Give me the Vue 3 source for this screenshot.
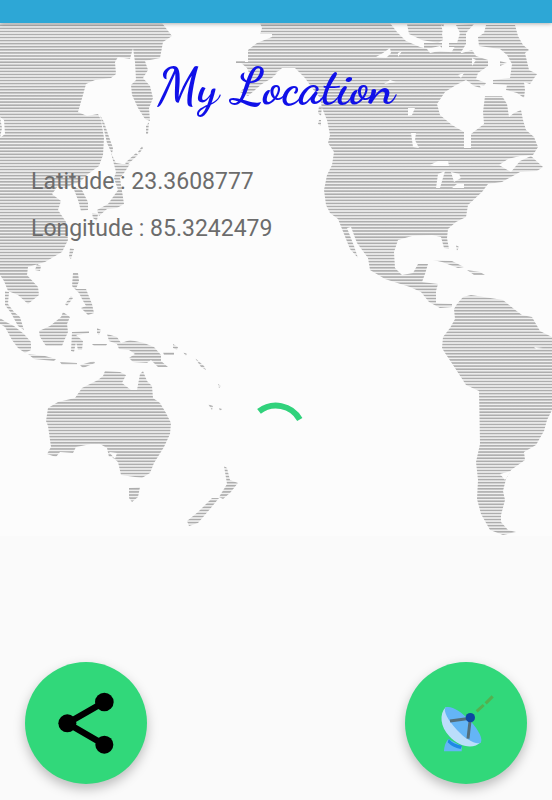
<script setup>
import { ref } from 'vue'

const latitude = ref('23.3608777')
const longitude = ref('85.3242479')

const land = [
  // Asia
  'M0 23H162L172 36 163 42 160 58 145 61 148 70 143 78 150 86 153 98 149 108 150 121 145 119 138 108 132 95 131 85 136 80 135 62 133 48 130 59 118 57 115 62 116 74 111 78 95 80 86 84 83 95 78 112 87 116 98 114 101 120 104 138 103 155 99 166 88 174 80 182 73 184 66 188 58 186 52 194 61 201 58 210 66 222 68 240 62 252 45 262 28 267 27 275 38 287 39 295 28 304 18 295 8 291 4 281 0 275Z',
  // Korea
  'M73 187L82 190 88 202 88 210 81 211 78 200Z',
  // Sakhalin, Japan and the Kurils
  'M100 115L104 122 108 134 113 148 112 154 107 143 104 130Z',
  'M111 153L116 163 122 164 130 164 124 173 120 178 124 204 117 208 107 209 99 216 97 210 108 204 113 197 118 190 114 178 116 172Z',
  'M92 213L98 214 97 221 93 218Z',
  'M149 122L148 134 146 134 146 126ZM142 146L143 148 139 154 138 152ZM136 153L138 155 127 165 125 163Z',
  // Taiwan and Hainan
  'M70 248L74 249 71 259 69 257ZM37 264L41 266 40 271 35 270Z',
  // Malay peninsula and Sumatra
  'M5 291L9 292 8 304 14 312 20 317 24 330 18 326 11 313 5 305Z',
  'M0 318L6 322 14 326 24 334 31 342 31 350 25 353 18 348 12 340 5 327 0 324Z',
  'M28 354L45 356 56 359 54 361 34 359ZM60 362L77 363 77 365 62 365ZM80 365L94 361 95 363 83 368Z',
  // Borneo and Sulawesi
  'M39 331L50 326 61 317 63 312 70 317 67 324 68 332 64 341 62 346 46 346 40 337Z',
  'M72 332L89 331 89 333 76 335 83 341 82 350 78 350 76 342 74 352 71 351Z',
  // Philippines
  'M73 273L78 273 79 281 76 289 86 289 92 304 94 313 88 315 81 308 86 306 82 299 79 293 72 286ZM71 296L73 298 67 306 65 304ZM97 328L101 330 99 335 97 333ZM92 344L107 344 106 346 94 346Z',
  // New Guinea and the Pacific islands
  'M107 334L117 337 121 343 130 340 144 343 154 347 161 355 161 361 168 367 158 367 151 360 147 363 133 362 129 358 135 354 129 350 119 349 117 344 109 341Z',
  'M163 352L174 352 174 355 164 355ZM173 344L178 347 177 350 173 348ZM183 352L187 354 186 356ZM195 358L204 366 206 370 201 367ZM208 404L213 406 212 410ZM218 384L221 386 219 388ZM219 408L222 409 220 411Z',
  // Australia and Tasmania
  'M105 371L120 372 126 375 122 383 131 390 137 390 140 374 143 371 147 381 152 386 153 398 160 403 166 413 171 423 170 434 164 447 154 463 150 473 142 478 128 476 121 475 118 462 112 457 109 457 107 448 100 444 91 444 76 447 73 453 60 452 56 457 47 454 51 447 48 426 46 421 48 408 58 402 75 398 82 388 98 380 103 376Z',
  'M129 488L140 487 138 497 132 502 129 498Z',
  // New Zealand
  'M224 466L227 468 230 480 238 483 230 493 223 499 219 497 224 489 227 484ZM212 498L219 498 210 509 198 523 189 526 187 521 198 512Z',
  // North America
  'M260 23H390L397 32 406 41 420 47 432 50 449 52 462 53 472 50 476 56 488 60 488 66 478 73 476 79 481 88 474 86 466 80 456 85 445 92 437 104 440 115 452 125 464 132 464 148 471 148 471 134 484 124 483 112 485 96 502 96 507 104 509 117 514 113 521 110 523 120 526 130 534 137 538 147 533 155 520 156 508 159 499 165 511 172 520 161 531 156 543 167 537 171 520 172 502 182 488 184 482 192 468 205 466 217 456 222 448 229 447 238 449 249 444 248 441 237 432 235 412 236 398 240 394 252 395 268 402 275 413 273 418 264 428 264 425 274 422 282 438 284 436 291 436 303 452 304 452 307 440 308 429 302 421 292 410 287 385 279 370 270 368 258 357 243 351 227 347 228 354 246 358 258 350 249 344 234 338 219 330 213 326 205 324 190 327 175 332 165 334 152 328 143 330 135 327 120 322 108 320 98 312 88 305 78 295 68 282 68 272 78 262 84 248 96 240 92 252 80 247 68 240 62 248 62 248 50 257 43 272 37 272 34 260 34 262 28Z',
  // Arctic islands
  'M407 24H444L442 34 443 40 438 43 422 40 409 34ZM424 43H442V48H424ZM456 25L474 24 466 33 466 44 460 54 451 53 457 43 460 33ZM449 43H457V47H449Z',
  'M486 25H515L518 36 523 45 529 50 525 53 529 70 537 74 530 84 524 82 525 90 524 98 517 93 506 90 507 85 493 84 493 80 510 78 512 64 507 55 500 49 479 46 478 37 484 33Z',
  'M500 61L507 63 500 66ZM473 78L486 83 484 86 472 83Z',
  'M319 106L322 106 321 116 318 113ZM319 120L321 120 321 126 318 124ZM236 61H245V63H236Z',
  // Caribbean
  'M433 260L452 261 464 267 458 268 442 262ZM467 270L480 272 485 275 474 275ZM456 245L459 247 457 251Z',
  // South America
  'M457 304L463 297 471 295 484 297 503 300 514 309 522 315 532 317 540 331 552 337V410L547 420 544 431 536 445 524 452 525 460 511 470 506 479 503 491 505 500 501 515 501 522 508 530 516 532 503 535 490 530 481 514 477 499 478 480 476 462 480 444 479 391 466 385 455 368 445 353 442 348 443 337 450 328 455 319 454 309Z',
].join('')

const water = [
  // Great Lakes
  'M430 165L438 161 448 161 449 166 440 166 434 166ZM438 174L445 171 440 188 436 188ZM451 172L459 174 461 178 454 182ZM457 184H464V188H452Z',
  // Northern lakes and channels
  'M376 57L383 53 390 48 391 53 386 58ZM398 53L402 51 398 57ZM411 133L416 133 415 140 419 148 413 147ZM408 108H415L412 115 408 116ZM458 75L464 73 461 78ZM472 58L476 60 472 66ZM390 80L396 82 384 84ZM427 49L440 46 444 50 430 53ZM441 25L447 30 443 32Z',
  // Inland gaps
  'M0 117L4 120 5 134 0 138 2 128ZM60 191L66 192 67 197 62 197ZM109 452L117 453 115 459ZM534 347L543 348 536 349ZM500 474L511 471 505 480ZM276 72L286 68 280 76Z',
].join('')
</script>

<template>
  <div class="screen">
    <header class="status-bar"></header>
    <main class="content">
      <svg class="map" viewBox="0 23 552 513" aria-hidden="true">
        <defs>
          <linearGradient id="stripes" gradientUnits="userSpaceOnUse" x1="0" y1="23.77" x2="0" y2="26.84" spreadMethod="repeat">
            <stop offset="0" stop-color="#f2f2f2" />
            <stop offset="0.2" stop-color="#e2e2e2" />
            <stop offset="0.38" stop-color="#adadad" />
            <stop offset="0.62" stop-color="#adadad" />
            <stop offset="0.8" stop-color="#e2e2e2" />
            <stop offset="1" stop-color="#f2f2f2" />
          </linearGradient>
        </defs>
        <rect y="23" width="552" height="513" fill="#fcfcfc" />
        <path :d="land" fill="url(#stripes)" />
        <path :d="water" fill="#fcfcfc" />
      </svg>

      <h1 class="title">My Location</h1>
      <section class="coords">
        <p>Latitude : {{ latitude }}</p>
        <p>Longitude : {{ longitude }}</p>
      </section>

      <div class="progress" role="progressbar" aria-label="Loading">
        <svg viewBox="0 0 62 62">
          <path d="M14 9.4A27.5 27.5 0 0 1 54.8 17.4" fill="none" stroke="#31d27c" stroke-width="6" />
        </svg>
      </div>

      <footer class="actions">
        <button class="fab" type="button" aria-label="Share">
          <svg viewBox="75 63 366 366">
            <path d="M313 183L202 247L313 311" fill="none" stroke="#000" stroke-width="19" />
            <circle cx="313" cy="183" r="28" />
            <circle cx="202" cy="247" r="27" />
            <circle cx="313" cy="311" r="27" />
          </svg>
        </button>
        <button class="fab" type="button" aria-label="Find location">
          <svg viewBox="75 63 366 366">
            <path d="M205 294Q192 310 192 331H245V316Z" fill="#64b5f6" />
            <path d="M206 294Q221 311 246 314L242 324Q217 319 203 304Z" fill="#1e88e5" />
            <path d="M197 199C177 219 181 258 208 286C235 317 280 327 302 304Z" fill="#bbdefb" />
            <path d="M197 199C214 193 243 211 270 239C298 268 310 296 302 305C287 312 257 295 231 267C204 238 188 209 197 199Z" fill="#64b5f6" />
            <path d="M210 240L271 232L264 293" fill="none" stroke="#546e7a" stroke-width="9" />
            <circle cx="271" cy="230" r="14" fill="#0d47a1" />
            <path d="M290 211L311 192M317 187L338 166" fill="none" stroke="#54b04f" stroke-width="9" />
          </svg>
        </button>
      </footer>
    </main>
  </div>
</template>

<style>
body {
  margin: 0;
  background: #fafafa;
}
</style>

<style scoped>
.screen {
  display: flex;
  flex-direction: column;
  min-height: 100vh;
  font-family: Roboto, sans-serif;
}
.status-bar {
  position: relative;
  z-index: 1;
  height: 23px;
  background: #2da7d6;
  box-shadow: 0 1px 4px rgba(0, 0, 0, 0.3);
}
.content {
  position: relative;
  flex: 1;
  display: flex;
  flex-direction: column;
}
.map {
  position: absolute;
  top: 0;
  left: 0;
  width: 100%;
  z-index: -1;
}
.title {
  margin: 36px 0 0;
  font: 700 52px/56px "Dancing Script", cursive;
  text-align: center;
  color: #1010e8;
}
.coords {
  display: flex;
  flex-direction: column;
  gap: 15px;
  padding: 51px 31px 0;
}
.coords p {
  margin: 0;
  font-size: 23px;
  line-height: 32px;
  color: #6c6c6c;
}
.progress {
  margin-top: 157px;
  text-align: center;
}
.progress svg {
  display: inline-block;
  width: 62px;
  height: 62px;
}
.actions {
  display: flex;
  justify-content: space-between;
  margin-top: auto;
  padding: 24px 25px 16px;
}
.fab {
  width: 122px;
  height: 122px;
  padding: 0;
  border: 0;
  border-radius: 50%;
  background: #31d87a;
  box-shadow: 0 5px 12px rgba(0, 0, 0, 0.25);
  cursor: pointer;
}
.fab svg {
  display: block;
  width: 100%;
  height: 100%;
}
</style>
